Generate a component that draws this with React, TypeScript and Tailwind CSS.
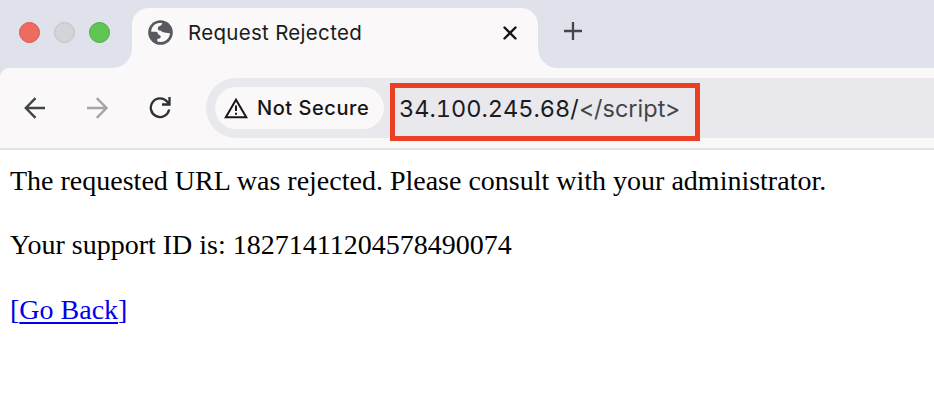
import React from "react";

function Globe() {
  return (
    <svg className="h-[25px] w-[25px]" viewBox="0 0 25 25">
      <circle cx="12.5" cy="12.5" r="12.3" fill="#57595e" />
      <path
        fill="#faf8f9"
        d="M3.2 11.8C3.3 7.2 6.5 3.8 10.5 3.1H14.2C13.9 4.9 13.2 5.7 12 6C10.6 6.3 9.9 7 9.9 8.4C9.9 9.8 10.5 10.5 12 10.6C13.3 10.7 13.6 12.2 15 12.2C17.2 12.1 18.2 13.2 22 13.2C21.6 17.9 18.2 21.7 12.8 22L9.3 21.4V18.8C10.8 18.8 12.4 18.6 12.7 17.2C13 15.8 12.2 15.2 10.8 14.7C9.6 14.2 10 12 8.2 11.8Z"
      />
    </svg>
  );
}

function TabStrip() {
  return (
    <div className="flex h-[68px] bg-[#faf8f9]">
      <div className="flex w-[132px] items-start gap-[14px] rounded-br-[20px] bg-[#dfe1eb] pt-[22px] pl-[19px]">
        <span className="h-[21px] w-[21px] rounded-full border border-[#df5549] bg-[#ed6b5f]" />
        <span className="h-[21px] w-[21px] rounded-full border border-[#c1c2c5] bg-[#d3d4d7]" />
        <span className="h-[21px] w-[21px] rounded-full border border-[#49ad38] bg-[#61c554]" />
      </div>
      <div className="h-12 w-[406px] bg-[#dfe1eb] pt-2">
        <div className="flex h-[60px] items-start rounded-t-[17px] bg-[#faf8f9] pt-[12px] pl-4">
          <Globe />
          <span className="ml-[15px] w-[313px] font-['Inter','Liberation_Sans',sans-serif] text-[20.5px] leading-[25px] tracking-[0.3px] text-[#1b1b1d]">
            Request Rejected
          </span>
          <svg className="mt-[6px] ml-[2px] h-[14px] w-[14px]" viewBox="0 0 14 14" fill="none" stroke="#151517" strokeWidth="2.4" strokeLinecap="round">
            <path d="M1.5 1.5L12.5 12.5M12.5 1.5L1.5 12.5" />
          </svg>
        </div>
      </div>
      <div className="flex-1 rounded-bl-[20px] bg-[#dfe1eb] pt-[22px] pl-[26px]">
        <svg className="h-[18px] w-[18px]" viewBox="0 0 18 18" fill="none" stroke="#45464b" strokeWidth="2.3">
          <path d="M9 0V18M0 9H18" />
        </svg>
      </div>
    </div>
  );
}

function Toolbar() {
  return (
    <div className="bg-[#dfe1eb]">
      <div className="flex h-[82px] items-start rounded-tl-[9px] bg-[#faf8f9] pt-[10px] shadow-[inset_0_-2px_0_#e3e1e4]">
        <div className="flex w-[206px] pt-[19px] pl-6">
          <svg className="h-[22px] w-[22px]" viewBox="0 0 22 22" fill="none" stroke="#43444a" strokeWidth="2.4">
            <path d="M21 11H2M11.5 1.2L1.8 11L11.5 20.8" />
          </svg>
          <svg className="ml-[41px] h-[22px] w-[22px]" viewBox="0 0 22 22" fill="none" stroke="#a5a4a7" strokeWidth="2.4">
            <path d="M0 11H19M9.8 1.2L19.5 11L9.8 20.8" />
          </svg>
          <svg className="ml-[40px] h-[22px] w-[22px]" viewBox="0 0 22 22" fill="none" stroke="#303136" strokeWidth="2.3">
            <path d="M20.2 12.6A9.3 9.3 0 1 1 18.3 4.8L20 7M20.5 0V7.5H13" />
          </svg>
        </div>
        <div className="flex h-[60px] flex-1 items-start rounded-l-full bg-[#e9e8ed] pl-[9px]">
          <div className="mt-[9px] flex h-[42px] w-[169px] items-center rounded-full bg-[#faf8f9] pl-[9px]">
            <svg className="h-[21px] w-[25px]" viewBox="0 0 25 21" fill="none" stroke="#18181a" strokeWidth="2">
              <path d="M12 1.7L1.8 19.2H22.3Z" />
              <path d="M12 7.5V13M12 14.8V16.8" />
            </svg>
            <span className="ml-2 font-['Inter','Liberation_Sans',sans-serif] text-[20px] font-medium tracking-[0.55px] whitespace-nowrap text-[#151517]">
              Not Secure
            </span>
          </div>
          <div className="mt-[5px] ml-[6px] h-[58px] w-[310px] border-[5px] border-[#eb4026] pt-[5px] pl-[4px] font-['Inter','Liberation_Sans',sans-serif] text-[23.5px] leading-[32px] whitespace-nowrap text-[#454549] tabular-nums">
            <span className="text-[#1b1b1d]">34.100.245.68/</span>&lt;/script&gt;
          </div>
        </div>
      </div>
    </div>
  );
}

export default function App() {
  return (
    <div className="h-[414px] w-[934px] overflow-hidden bg-white">
      <TabStrip />
      <Toolbar />
      <main className="flex flex-col pt-[15px] pl-[10px] font-['Liberation_Serif','Times_New_Roman',serif] text-[28px] leading-[32px] text-black">
        <p className="whitespace-nowrap">The requested URL was rejected. Please consult with your administrator.</p>
        <p className="mt-8">Your support ID is: 18271411204578490074</p>
        <p className="mt-[33px]">
          <a href="#" className="text-[#0000ee]">
            [<span className="underline decoration-2 underline-offset-[3px]">Go Back</span>]
          </a>
        </p>
      </main>
    </div>
  );
}
